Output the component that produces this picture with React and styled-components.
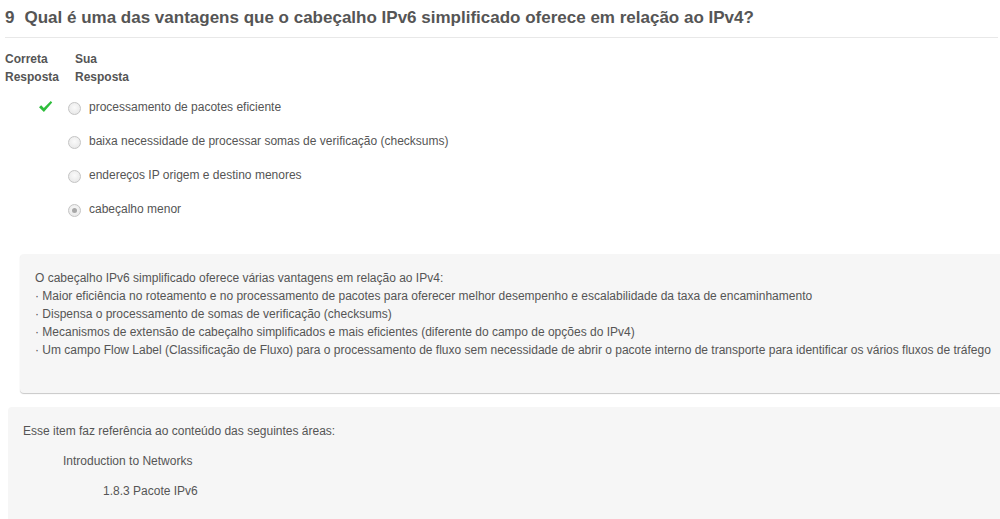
import React from 'react';
import styled, { createGlobalStyle } from 'styled-components';

const GlobalStyle = createGlobalStyle`
  html, body {
    margin: 0;
    padding: 0;
    background: #fff;
  }
  body {
    font-family: "Liberation Sans", Arial, sans-serif;
    font-size: 12px;
    color: #555;
    overflow: hidden;
  }
`;

const Page = styled.div`
  width: 1000px;
`;

const Title = styled.h2`
  margin: 0;
  padding: 8px 0 0 5px;
  font-size: 17px;
  line-height: 20px;
  font-weight: bold;
  color: #555;
  display: flex;
  gap: 10px;
`;

const Divider = styled.hr`
  border: 0;
  border-top: 1px solid #e8e8e8;
  margin: 9px 2px 12px 5px;
`;

const HeaderRow = styled.div`
  display: flex;
  padding-left: 5px;
  font-weight: bold;
  line-height: 18px;
  color: #555;
`;

const HeaderCell = styled.div`
  width: ${(p) => p.$width}px;
`;

const Options = styled.div`
  margin-top: 4px;
`;

const OptionRow = styled.div`
  display: flex;
  align-items: center;
  height: 34px;
`;

const CheckCell = styled.div`
  width: 68px;
  padding-left: 38px;
  box-sizing: border-box;
  display: flex;
  align-items: center;
  margin-top: -2px;
`;

const Radio = styled.span`
  width: 13px;
  height: 13px;
  border-radius: 50%;
  border: 1px solid #c4c4c4;
  background: radial-gradient(circle at 50% 40%, #fafafa 0%, #e4e4e4 100%);
  box-sizing: border-box;
  display: flex;
  align-items: center;
  justify-content: center;
  margin-right: 8px;
  margin-top: 2px;

  &::after {
    content: '';
    width: 5px;
    height: 5px;
    border-radius: 50%;
    background: ${(p) => (p.$checked ? '#a8a8a8' : 'transparent')};
  }
`;

const OptionText = styled.span`
  line-height: 18px;
`;

const Explanation = styled.div`
  margin: 28px 0 14px 20px;
  padding: 15px 15px 34px;
  background: #f6f6f6;
  border-radius: 4px 0 0 4px;
  box-shadow: 0 1px 1px #c8c8c8;
  line-height: 18px;
`;

const Line = styled.div`
  white-space: nowrap;
`;

const Reference = styled.div`
  margin-left: 8px;
  padding: 15px 15px 20px;
  background: #f6f6f6;
  border-radius: 4px 0 0 0;
  line-height: 18px;
`;

const RefLine = styled.div`
  padding-left: ${(p) => p.$indent}px;
  margin-bottom: 12px;
`;

function CheckMark() {
  return (
    <svg width="15" height="13" viewBox="0 0 15 13">
      <path d="M1 7.2 L3.2 5.2 L5.8 8 L12.8 1 L14.2 2.6 L5.9 12 Z" fill="#2ebd3c" />
    </svg>
  );
}

const options = [
  { text: 'processamento de pacotes eficiente', correct: true },
  { text: 'baixa necessidade de processar somas de verificação (checksums)' },
  { text: 'endereços IP origem e destino menores' },
  { text: 'cabeçalho menor', selected: true },
];

const explanation = [
  'O cabeçalho IPv6 simplificado oferece várias vantagens em relação ao IPv4:',
  '· Maior eficiência no roteamento e no processamento de pacotes para oferecer melhor desempenho e escalabilidade da taxa de encaminhamento',
  '· Dispensa o processamento de somas de verificação (checksums)',
  '· Mecanismos de extensão de cabeçalho simplificados e mais eficientes (diferente do campo de opções do IPv4)',
  '· Um campo Flow Label (Classificação de Fluxo) para o processamento de fluxo sem necessidade de abrir o pacote interno de transporte para identificar os vários fluxos de tráfego',
];

export default function App() {
  return (
    <Page>
      <GlobalStyle />
      <Title>
        <span>9</span>
        <span>Qual é uma das vantagens que o cabeçalho IPv6 simplificado oferece em relação ao IPv4?</span>
      </Title>
      <Divider />
      <HeaderRow>
        <HeaderCell $width={70}>Correta<br />Resposta</HeaderCell>
        <HeaderCell $width={80}>Sua<br />Resposta</HeaderCell>
      </HeaderRow>
      <Options>
        {options.map((o) => (
          <OptionRow key={o.text}>
            <CheckCell>{o.correct && <CheckMark />}</CheckCell>
            <Radio $checked={o.selected} />
            <OptionText>{o.text}</OptionText>
          </OptionRow>
        ))}
      </Options>
      <Explanation>
        {explanation.map((l) => (
          <Line key={l}>{l}</Line>
        ))}
      </Explanation>
      <Reference>
        <RefLine $indent={0}>Esse item faz referência ao conteúdo das seguintes áreas:</RefLine>
        <RefLine $indent={40}>Introduction to Networks</RefLine>
        <RefLine $indent={80}>1.8.3 Pacote IPv6</RefLine>
      </Reference>
    </Page>
  );
}
